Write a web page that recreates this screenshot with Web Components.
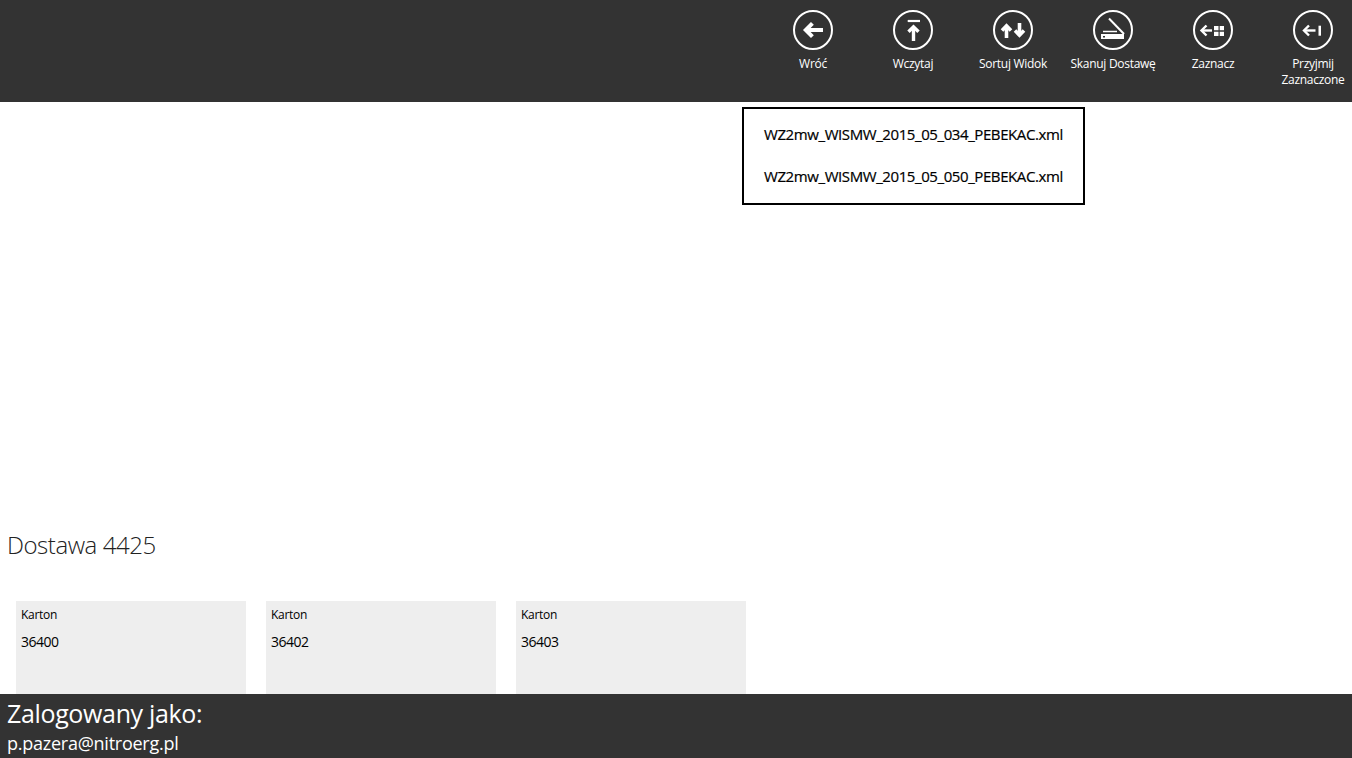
<!DOCTYPE html>
<html lang="pl">
<head>
<meta charset="utf-8">
<title>Dostawa</title>
<style>
html,body{margin:0;height:100%;overflow:hidden;background:#fff;}
body{font-family:"Open Sans","Liberation Sans",sans-serif;}
</style>
</head>
<body>
<delivery-page>
  <app-bar slot="top">
    <bar-button label="Wróć"><svg viewBox="0 0 40 40"><path d="M30 20H14" stroke-width="4"/><path d="M19.400 13.400 12.800 20l6.600 6.600" stroke-width="4"/></svg></bar-button>
    <bar-button label="Wczytaj"><svg viewBox="0 0 40 40"><path d="M14.700 11H27" stroke-width="2.200"/><path d="M20.500 31V18" stroke-width="3.400"/><path d="M15.500 21.800l5-5 5 5" stroke-width="3.400"/></svg></bar-button>
    <bar-button label="Sortuj Widok"><svg viewBox="0 0 40 40"><path d="M13.500 28V17" stroke-width="3.600"/><path d="M9 20.400l4.500-4.500 4.500 4.500" stroke-width="3.600"/><path d="M26.500 13v11" stroke-width="3.600"/><path d="M22 20.600l4.500 4.500 4.500-4.500" stroke-width="3.600"/></svg></bar-button>
    <bar-button label="Skanuj Dostawę"><svg viewBox="0 0 40 40"><path d="M16 8.500 31 24" stroke-width="2"/><path d="M10 21.500H24" stroke-width="1.500"/><path d="M8 24h23v5H8z" fill="#fff" stroke="none"/><path d="M10 26h2v1.500h-2z" fill="#333" stroke="none"/></svg></bar-button>
    <bar-button label="Zaznacz"><svg viewBox="0 0 40 40"><path d="M19 20.500H10" stroke-width="2.400"/><path d="M13.500 15.500 8.500 20.500l5 5" stroke-width="2.400"/><path d="M21 16h4.500v4.200H21zM26.700 16H31v4.200h-4.300zM21 21.800h4.500V26H21zM26.700 21.800H31V26h-4.300z" fill="#fff" stroke="none"/></svg></bar-button>
    <bar-button label="Przyjmij Zaznaczone"><svg viewBox="0 0 40 40"><path d="M22.500 20.500H12" stroke-width="2.400"/><path d="M16 15.500l-5 5 5 5" stroke-width="2.400"/><path d="M25.500 15.700H28v10h-2.500z" fill="#fff" stroke="none"/></svg></bar-button>
  </app-bar>

  <file-list slot="popup">
    <file-item>WZ2mw_WISMW_2015_05_034_PEBEKAC.xml</file-item>
    <file-item>WZ2mw_WISMW_2015_05_050_PEBEKAC.xml</file-item>
  </file-list>

  <delivery-section title-text="Dostawa 4425">
    <carton-card number="36400"></carton-card>
    <carton-card number="36402"></carton-card>
    <carton-card number="36403"></carton-card>
  </delivery-section>

  <user-footer slot="bottom" email="p.pazera@nitroerg.pl"></user-footer>
</delivery-page>

<script>
// page frame: bar on top, content clipped in the middle, footer at the bottom
class DeliveryPage extends HTMLElement{
  constructor(){
    super();
    this.attachShadow({mode:'open'}).innerHTML=`
      <style>
        :host{display:flex;flex-direction:column;height:758px;position:relative;overflow:hidden;}
        main{flex:1;min-height:0;overflow:hidden;}
        ::slotted([slot=popup]){position:absolute;left:742px;top:107px;}
      </style>
      <slot name="top"></slot>
      <main><slot></slot></main>
      <slot name="popup"></slot>
      <slot name="bottom"></slot>`;
  }
}
customElements.define("delivery-page",DeliveryPage);

class AppBar extends HTMLElement{
  constructor(){
    super();
    this.attachShadow({mode:'open'}).innerHTML=`
      <style>
        :host{display:flex;height:102px;flex:none;background:#333;padding-left:763px;box-sizing:border-box;}
      </style>
      <slot></slot>`;
  }
}
customElements.define("app-bar",AppBar);

class BarButton extends HTMLElement{
  constructor(){
    super();
    this.attachShadow({mode:'open'}).innerHTML=`
      <style>
        :host{display:flex;flex:none;flex-direction:column;align-items:center;width:100px;padding-top:10px;box-sizing:border-box;color:#fff;}
        .ring{width:36px;height:36px;border:2px solid #fff;border-radius:50%;position:relative;}
        ::slotted(svg){position:absolute;left:-2px;top:-2px;width:40px;height:40px;fill:none;stroke:#fff;}
        .label{margin-top:6px;width:92px;text-align:center;font-size:12px;line-height:16px;letter-spacing:-.28px;}
      </style>
      <div class="ring"><slot></slot></div>
      <div class="label"></div>`;
  }
  connectedCallback(){
    this.shadowRoot.querySelector(".label").textContent=this.getAttribute("label");
  }
}
customElements.define("bar-button",BarButton);

class FileList extends HTMLElement{
  constructor(){
    super();
    this.attachShadow({mode:'open'}).innerHTML=`
      <style>
        :host{display:flex;flex-direction:column;width:343px;height:98px;box-sizing:border-box;border:2px solid #000;background:#fff;padding:4px 0 0 20px;}
      </style>
      <slot></slot>`;
  }
}
customElements.define("file-list",FileList);

class FileItem extends HTMLElement{
  constructor(){
    super();
    this.attachShadow({mode:'open'}).innerHTML=`
      <style>
        :host{display:block;height:42px;line-height:42px;font-size:15px;font-weight:500;color:#000;white-space:nowrap;letter-spacing:-.41px;-webkit-text-stroke:.2px #000;}
      </style>
      <slot></slot>`;
  }
}
customElements.define("file-item",FileItem);

class DeliverySection extends HTMLElement{
  constructor(){
    super();
    this.attachShadow({mode:'open'}).innerHTML=`
      <style>
        :host{display:block;padding:423px 0 0 7px;}
        h2{margin:0;height:40px;line-height:40px;font-size:24px;font-weight:300;color:#222;letter-spacing:-.45px;}
        .cards{display:flex;gap:20px;margin:36px 0 0 9px;}
      </style>
      <h2></h2>
      <div class="cards"><slot></slot></div>`;
  }
  connectedCallback(){
    this.shadowRoot.querySelector("h2").textContent=this.getAttribute("title-text");
  }
}
customElements.define("delivery-section",DeliverySection);

class CartonCard extends HTMLElement{
  constructor(){
    super();
    this.attachShadow({mode:'open'}).innerHTML=`
      <style>
        :host{display:block;width:230px;height:120px;box-sizing:border-box;background:#eee;padding:6px 5px;color:#000;}
        .kind{font-size:12px;line-height:16px;letter-spacing:-.3px;}
        .num{margin-top:9px;font-size:14px;line-height:20px;letter-spacing:-.5px;}
      </style>
      <div class="kind">Karton</div>
      <div class="num"></div>`;
  }
  connectedCallback(){
    this.shadowRoot.querySelector(".num").textContent=this.getAttribute("number");
  }
}
customElements.define("carton-card",CartonCard);

class UserFooter extends HTMLElement{
  constructor(){
    super();
    this.attachShadow({mode:'open'}).innerHTML=`
      <style>
        :host{display:block;flex:none;height:64px;box-sizing:border-box;background:#333;color:#fff;padding:2px 0 0 7px;}
        .who{font-size:25px;line-height:34px;letter-spacing:-.35px;}
        .mail{font-size:18px;line-height:26px;letter-spacing:-.25px;}
      </style>
      <div class="who">Zalogowany jako:</div>
      <div class="mail"></div>`;
  }
  connectedCallback(){
    this.shadowRoot.querySelector(".mail").textContent=this.getAttribute("email");
  }
}
customElements.define("user-footer",UserFooter);
</script>
</body>
</html>
